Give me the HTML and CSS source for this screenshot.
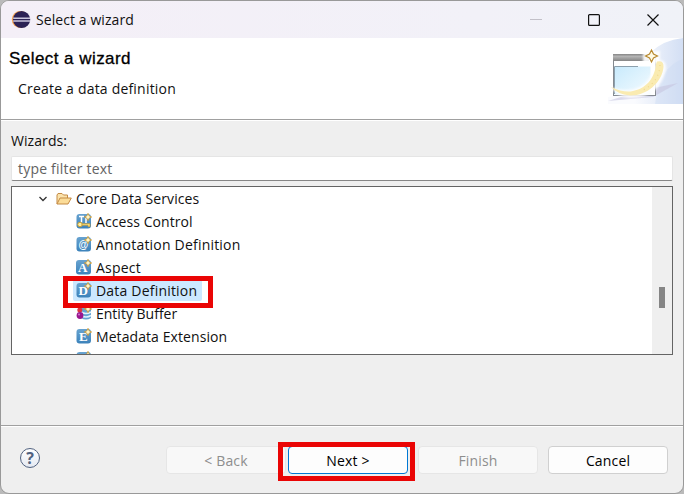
FILE: index.html
```html
<!DOCTYPE html>
<html lang="en">
<head>
<meta charset="utf-8">
<title>Select a wizard</title>
<link rel="stylesheet" href="styles.css">
</head>
<body>
<svg width="0" height="0" class="defs">
  <defs>
    <linearGradient id="tile" x1="0" y1="0" x2="0" y2="1"><stop offset="0" stop-color="#68a3d0"/><stop offset="1" stop-color="#3c82ba"/></linearGradient>
    <linearGradient id="bar" x1="0" y1="0" x2="0" y2="1"><stop offset="0" stop-color="#858585"/><stop offset=".35" stop-color="#b4b4b4"/><stop offset="1" stop-color="#858585"/></linearGradient>
    <linearGradient id="pane" x1="0" y1="0" x2="1" y2="1"><stop offset="0" stop-color="#c8eafc"/><stop offset="1" stop-color="#f4fbff"/></linearGradient>
    <linearGradient id="sky" x1="0" y1="0" x2="1" y2="0"><stop offset=".35" stop-color="#fafbfe"/><stop offset="1" stop-color="#d3dff4"/></linearGradient>
    <linearGradient id="help" x1="0" y1="0" x2="0" y2="1"><stop offset="0" stop-color="#fff"/><stop offset="1" stop-color="#e4e9f2"/></linearGradient>
    <filter id="soft" x="-20%" y="-20%" width="140%" height="140%"><feGaussianBlur stdDeviation="1"/></filter>
    <symbol id="spark" viewBox="0 0 7 7"><path d="M3.500 .3 4.500 2.500 6.700 3.500 4.500 4.500 3.500 6.700 2.500 4.500 .3 3.500 2.500 2.500Z" fill="#fff6c8" stroke="#c39436" stroke-width=".7"/></symbol>
  </defs>
</svg>
<main class="window">
  <header class="titlebar">
    <svg class="logo" width="20" height="20" viewBox="0 0 20 20"><circle cx="9.300" cy="9.500" r="8.500" fill="#f5a04c"/><circle cx="10.600" cy="9.500" r="8.600" fill="#2c2255"/><path d="M2.200 8.200h17M2.200 10.900h17" stroke="#c9c5dc" stroke-width="1.500"/></svg>
    <span class="caption">Select a wizard</span>
    <svg class="controls" width="132" height="16" viewBox="0 0 132 16" fill="none"><path d="M0 7.500h12" stroke="#c2c0c8"/><rect x="58.600" y="2.600" width="10.800" height="10.800" rx="1" stroke="#111" stroke-width="1.200"/><path d="M117.500 2.500l11 11M128.500 2.500l-11 11" stroke="#111" stroke-width="1.200"/></svg>
  </header>
  <section class="banner">
    <div class="intro">
      <h1>Select a wizard</h1>
      <p class="wide">Create a data definition</p>
    </div>
    <svg class="art" width="75" height="66" viewBox="608 38 75 66">
      <path d="M650 53Q663 40 683 38V104H608V97L640 91Z" fill="url(#sky)"/>
      <path d="M655 104Q660 66 683 59V104Z" fill="#cbd9f2" opacity=".4"/>
      <path d="M608 101L640 91 678 83 653 97Z" fill="#c7c5df" opacity=".6"/>
      <rect x="613.500" y="54.500" width="42" height="41" fill="#fff" stroke="#858a90"/>
      <rect x="613" y="54" width="36" height="7" fill="url(#bar)"/>
      <path d="M643 51h17v12h-17z" fill="#fff" filter="url(#soft)" opacity=".9"/>
      <rect x="614.500" y="66.500" width="36" height="28" fill="url(#pane)"/>
      <path d="M614.500 94V66.500H638" fill="none" stroke="#8ca0ad"/>
      <path d="M655 61Q667 57 666 70Q659 98 631 98Q620 99 610 87Q628 93 640 87Q652 80 655 61Z" fill="#fff" filter="url(#soft)" opacity=".85"/>
      <path d="M657 61.500Q664 60 663.500 67C662 83 646 96 630 95.500Q617 94 611 87Q624 93 633 91C648 88 655 76 656 64Z" fill="#faebb1"/>
      <path d="M660 65Q659 83 641 91" fill="none" stroke="#f2d98e" stroke-width="1.200" stroke-dasharray="1 4"/>
      <path d="M651.500 50L653.500 54 657.500 56 653.500 58 651.500 62 649.500 58 645.500 56 649.500 54Z" fill="#fffbe6" stroke="#b88a30" stroke-width="1.200"/>
    </svg>
  </section>
  <section class="content">
    <label class="label">Wizards:</label>
    <div class="filter">type filter text</div>
    <div class="tree">
      <div class="rows">
        <div class="row parent">
          <svg width="10" height="8" viewBox="0 0 10 8"><path d="M1.500 2l3.500 3.500 3.500-3.500" fill="none" stroke="#333" stroke-width="1.300"/></svg>
          <svg class="folder" width="16" height="14" viewBox="0 0 16 14"><path d="M1 12V3l1-1.500h4L7.500 3h4v3" fill="#fbe3ac" stroke="#c48b45"/><path d="M1 12L4 6h11.300L12 12Z" fill="#fbdc98" stroke="#c48b45"/></svg>
          <span>Core Data Services</span>
        </div>
        <div class="row"><svg class="ico" viewBox="0 0 16 16"><rect x=".5" y="1" width="14.500" height="14.500" rx="3" fill="url(#tile)"/><path d="M3 3.500h5M5.500 3.500v6M10 5v5" stroke="#fff" stroke-width="1.500"/><circle cx="4" cy="11.500" r="2.300" fill="#fff0a0" stroke="#c69a32"/><path d="M6 10.700h8v3h-2v-1.500h-6z" fill="#ffe582" stroke="#c69a32" stroke-width=".7"/><use href="#spark" x="8" width="8" height="8"/></svg><span>Access Control</span></div>
        <div class="row"><svg class="ico" viewBox="0 0 16 16"><rect x=".5" y="1" width="14.500" height="14.500" rx="3" fill="url(#tile)"/><text x="2.500" y="12" class="at">@</text><use href="#spark" x="8" width="8" height="8"/></svg><span class="wide">Annotation Definition</span></div>
        <div class="row"><svg class="ico" viewBox="0 0 16 16"><rect x="0" y="1" width="15" height="14.500" rx="3" fill="url(#tile)"/><text x="2" y="13" class="glyph">A</text><use href="#spark" x="8" width="8" height="8"/></svg><span class="wide">Aspect</span></div>
        <div class="row"><b class="chosen"></b><svg class="ico" viewBox="0 0 16 16"><rect x=".5" y="1" width="14.500" height="14.500" rx="3" fill="url(#tile)"/><text x="2.500" y="13" class="glyph">D</text><use href="#spark" x="8" width="8" height="8"/></svg><span class="wide">Data Definition</span><i class="mark"></i></div>
        <div class="row"><svg class="ico" viewBox="0 0 16 16"><path d="M5 2h10v11q-5 3-10 0z" fill="#64a3d3"/><path d="M5 7q5 3 10 0M5 10.500q5 3 10 0" fill="none" stroke="#e3f2fd" stroke-width="1.500"/><circle cx="3.800" cy="5" r="2.500" fill="#dc3542"/><circle cx="4" cy="10.500" r="3.400" fill="#9a168f"/><circle cx="3" cy="9.500" r="1" fill="#d277cb"/><use href="#spark" x="8" width="8" height="8"/></svg><span class="tight">Entity Buffer</span></div>
        <div class="row"><svg class="ico" viewBox="0 0 16 16"><rect x=".5" y="1" width="14.500" height="14.500" rx="3" fill="url(#tile)"/><text x="3" y="13" class="glyph">E</text><use href="#spark" x="8" width="8" height="8"/></svg><span>Metadata Extension</span></div>
        <div class="row"><svg class="ico" viewBox="0 0 16 16"><rect x=".5" y="1" width="14.500" height="14.500" rx="3" fill="url(#tile)"/><use href="#spark" x="8" width="8" height="8"/></svg></div>
      </div>
      <div class="scrollbar"><div class="thumb"></div></div>
    </div>
  </section>
  <footer class="footer">
    <svg class="help" width="22" height="22" viewBox="0 0 22 22"><circle cx="11" cy="11" r="9.500" fill="url(#help)" stroke="#50617f"/><text x="11" y="17" text-anchor="middle">?</text></svg>
    <div class="buttons">
      <div class="btn off">&lt; Back</div>
      <div class="btn primary">Next &gt;<i class="mark"></i></div>
      <div class="btn off">Finish</div>
      <div class="btn cancel">Cancel</div>
    </div>
  </footer>
</main>
</body>
</html>
```
FILE: styles.css
```css
* { box-sizing: border-box; }
body { margin: 0; background: #bababa; font: 14px/23px "Open Sans", "Noto Sans", sans-serif; letter-spacing: .08px; color: #111; overflow: hidden; }
.defs { display: block; width: 0; height: 0; }
.window { width: 684px; height: 494px; border: 1px solid #999; border-radius: 9px; background: #efefef; overflow: hidden; display: flex; flex-direction: column; }
.titlebar { height: 37px; background: linear-gradient(90deg, #f4eff7, #f2f1f8 70%, #f0f2f8); display: flex; align-items: center; padding: 0 21px 0 10px; flex: none; }
.caption { margin-left: 5px; flex: 1; }
.banner { height: 82px; background: #fff; border-bottom: 1px solid #a0a0a0; display: flex; justify-content: space-between; flex: none; }
.intro { padding: 9px 0 0 8px; }
h1 { margin: 0; font: 17px/23px "Liberation Sans", sans-serif; letter-spacing: .45px; color: #000; -webkit-text-stroke: .3px #000; }
.intro p { margin: 7px 0 0 9px; }
.wide { letter-spacing: .2px; }
.tight { letter-spacing: 0; }
.content { height: 305px; padding: 9px 10px 0; flex: none; display: flex; flex-direction: column; box-shadow: inset 0 1px #fff; }
.label { height: 27px; }
.filter { height: 25px; background: #fff; border: 1px solid #e5e5e5; border-bottom-color: #868686; border-radius: 2px; padding: 0 6px; color: #626262; letter-spacing: .2px; }
.tree { margin-top: 5px; height: 169px; border: 1px solid #646464; background: #fff; display: flex; overflow: hidden; }
.rows { flex: 1; }
.row { height: 23px; padding-left: 64px; display: flex; align-items: center; position: relative; white-space: nowrap; }
.row span { position: relative; }
.parent { padding-left: 26px; }
.folder { margin: 0 4px 0 8px; }
.ico { width: 16px; height: 16px; margin: 0 4px 2px 0; flex: none; position: relative; }
.glyph { font: bold 13px "Liberation Serif", serif; fill: #fff; }
.at { font: bold 10px "Liberation Sans", sans-serif; fill: #fff; }
.chosen { position: absolute; left: 61px; top: 0; width: 129px; height: 22px; background: #cce8ff; border-radius: 2px; }
.mark { position: absolute; border: 5px solid #ea0505; z-index: 2; }
.row .mark { left: 51px; top: -3px; width: 150px; height: 32px; }
.scrollbar { width: 20px; background: #efefef; padding: 100px 0 0 7px; }
.thumb { width: 6px; height: 21px; background: #858585; }
.footer { flex: 1; border-top: 1px solid #a0a0a0; box-shadow: inset 0 1px #fff; display: flex; justify-content: space-between; padding: 20px 15px 0 18px; }
.help { margin-top: 1px; }
.help text { font: bold 16px "Open Sans", sans-serif; fill: #50617f; }
.buttons { display: flex; gap: 10px; }
.btn { position: relative; width: 120px; height: 28px; border: 1px solid #d0d0d0; border-radius: 4px; background: #fdfdfd; text-align: center; line-height: 28px; color: #000; letter-spacing: .15px; }
.off { background: #f8f8f8; border-color: #e6e6e6; color: #8e8e8e; }
.primary { border-color: #0078d4; margin-left: -8px; }
.btn .mark { left: -11px; top: -5px; width: 137px; height: 39px; }
```
